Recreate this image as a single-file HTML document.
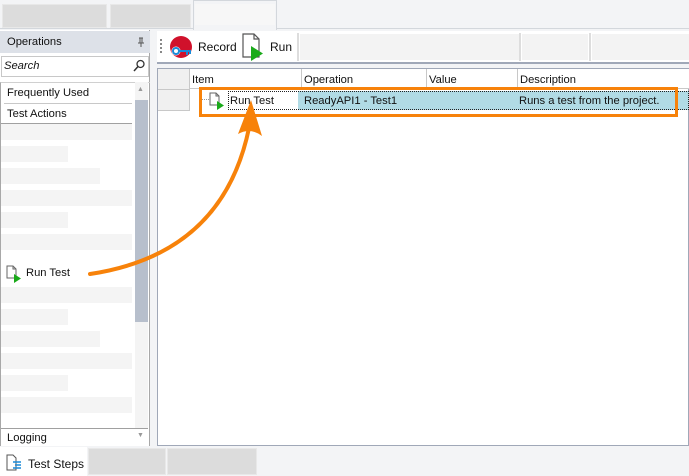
<html><head><style>
body{margin:0;width:689px;height:476px;background:#f3f4f6;position:relative;overflow:hidden;font-family:"Liberation Sans",sans-serif;font-size:11.2px;color:#111}
div{position:absolute;box-sizing:border-box}
.g{background:#f4f4f4}
.t{white-space:nowrap}
</style></head><body>
<div style="left:0;top:0;width:689px;height:29px;background:#f3f4f6;border-bottom:1px solid #d3d7dc"></div>
<div style="left:2px;top:4px;width:105px;height:24px;background:#dcdcdc;border:1px solid #e8e8e8"></div>
<div style="left:110px;top:4px;width:81px;height:24px;background:#dcdcdc;border:1px solid #e8e8e8"></div>
<div style="left:193px;top:0;width:84px;height:30px;background:#f3f4f6;border:1px solid #d3d7dc;border-bottom:none"></div>
<div style="left:195px;top:4px;width:80px;height:21px;background:#f7f7f7"></div>

<!-- left panel -->
<div style="left:0;top:30px;width:150px;height:416px;background:#fff;border-right:1px solid #a8a8a8"></div>
<div style="left:0;top:31px;width:150px;height:22px;background:#dde1e8"></div>
<div class="t" style="left:7px;top:36px">Operations</div>
<svg style="position:absolute;left:136px;top:37px" width="10" height="10"><path d="M3 1h4M4 1v5M6 1v5M2 6h6M5 6v4" stroke="#555" fill="none"/></svg>
<div style="left:1px;top:56px;width:148px;height:21px;background:#fff;border:1px solid #c8c8c8"></div>
<div class="t" style="left:4px;top:60px;font-style:italic">Search</div>
<svg style="position:absolute;left:133px;top:59px" width="12" height="13"><circle cx="7.5" cy="5" r="3.5" fill="none" stroke="#333" stroke-width="1.3"/><line x1="5" y1="7.5" x2="1" y2="12" stroke="#333" stroke-width="1.5"/></svg>
<div style="left:0;top:82px;width:150px;height:364px;border-left:1px solid #a8a8a8;border-top:1px solid #d0d0d0"></div>
<div class="t" style="left:7px;top:87px">Frequently Used</div>
<div style="left:4px;top:103px;width:128px;height:1px;background:#c8c8c8"></div>
<div class="t" style="left:7px;top:108px">Test Actions</div>
<div style="left:1px;top:123px;width:131px;height:1px;background:#a0a0a0"></div>
<div style="left:135px;top:82px;width:13px;height:346px;background:#f4f4f4"></div>
<div style="left:135px;top:100px;width:13px;height:222px;background:#b7bfcc"></div>
<div class="t" style="left:137px;top:86px;font-size:7px;color:#999">▲</div>
<div class="t" style="left:137px;top:432px;font-size:7px;color:#999">▼</div>
<div class="g" style="left:1px;top:124px;width:131px;height:16px"></div>
<div class="g" style="left:1px;top:146px;width:67px;height:16px"></div>
<div class="g" style="left:1px;top:168px;width:99px;height:16px"></div>
<div class="g" style="left:1px;top:190px;width:131px;height:16px"></div>
<div class="g" style="left:1px;top:212px;width:67px;height:16px"></div>
<div class="g" style="left:1px;top:234px;width:131px;height:16px"></div>
<div class="g" style="left:1px;top:287px;width:131px;height:16px"></div>
<div class="g" style="left:1px;top:309px;width:67px;height:16px"></div>
<div class="g" style="left:1px;top:331px;width:99px;height:16px"></div>
<div class="g" style="left:1px;top:353px;width:131px;height:16px"></div>
<div class="g" style="left:1px;top:375px;width:67px;height:16px"></div>
<div class="g" style="left:1px;top:397px;width:131px;height:16px"></div>
<svg style="position:absolute;left:5px;top:265px" width="18" height="18"><path d="M2 1h6l3 3v9H2z" fill="#fff" stroke="#666"/><path d="M8 1v3h3" fill="none" stroke="#666"/><path d="M9 9l7 4.5-7 4.5z" fill="#1aaa1a"/></svg>
<div class="t" style="left:26px;top:267px">Run Test</div>
<div style="left:1px;top:428px;width:147px;height:1px;background:#a0a0a0"></div>
<div class="t" style="left:7px;top:432px">Logging</div>

<!-- toolbar -->
<div style="left:157px;top:31px;width:532px;height:33px;background:#fff;border-bottom:2px solid #a0a8b8"></div>
<div style="left:160px;top:39px;width:2px;height:16px;background:repeating-linear-gradient(#888 0 2px,transparent 2px 4px)"></div>
<svg style="position:absolute;left:169px;top:36px" width="26" height="24"><circle cx="12" cy="11" r="11" fill="#d0112b"/><circle cx="7" cy="15" r="4.5" fill="#fff"/><circle cx="7" cy="15" r="3" fill="none" stroke="#1a8ad8" stroke-width="2"/><path d="M10 15h12M18 15v4M21 15v3" stroke="#1a8ad8" stroke-width="2"/></svg>
<div class="t" style="left:198px;top:40px;font-size:12px">Record</div>
<svg style="position:absolute;left:241px;top:33px" width="26" height="28"><path d="M2 1h11l5 5v18H2z" fill="#fff" stroke="#555" stroke-width="1.2"/><path d="M13 1v5h5" fill="none" stroke="#555" stroke-width="1.2"/><path d="M10 13l12 7.5L10 28z" fill="#1aaa1a"/></svg>
<div class="t" style="left:270px;top:40px;font-size:12px">Run</div>
<div style="left:297px;top:33px;width:2px;height:28px;background:#ddd"></div>
<div style="left:300px;top:34px;width:219px;height:26px;background:#f3f3f3"></div>
<div style="left:519px;top:33px;width:2px;height:28px;background:#ddd"></div>
<div style="left:522px;top:34px;width:66px;height:26px;background:#f3f3f3"></div>
<div style="left:589px;top:33px;width:2px;height:28px;background:#ddd"></div>
<div style="left:592px;top:34px;width:97px;height:26px;background:#f3f3f3"></div>

<!-- grid -->
<div style="left:157px;top:68px;width:532px;height:378px;background:#fff;border:1px solid #a0a8b8"></div>
<div style="left:158px;top:69px;width:531px;height:20px;background:#fff;border-bottom:1px solid #c8c8c8"></div>
<div style="left:158px;top:69px;width:32px;height:42px;background:#f0f0f0;border-right:1px solid #c8c8c8;border-bottom:1px solid #c8c8c8"></div>
<div style="left:158px;top:89px;width:32px;height:1px;background:#c8c8c8"></div>
<div style="left:301px;top:69px;width:1px;height:20px;background:#c8c8c8"></div>
<div style="left:426px;top:69px;width:1px;height:20px;background:#c8c8c8"></div>
<div style="left:517px;top:69px;width:1px;height:20px;background:#c8c8c8"></div>
<div class="t" style="left:192px;top:74px">Item</div>
<div class="t" style="left:304px;top:74px">Operation</div>
<div class="t" style="left:429px;top:74px">Value</div>
<div class="t" style="left:520px;top:74px">Description</div>
<div style="left:298px;top:91px;width:391px;height:19px;background:#b1dbe5"></div>
<div style="left:228px;top:91px;width:461px;height:19px;border:1px dotted #222"></div>
<div style="left:201px;top:99px;width:8px;height:1px;border-top:1px dotted #999"></div>
<svg style="position:absolute;left:208px;top:92px" width="18" height="18"><path d="M2 1h6l3 3v9H2z" fill="#fff" stroke="#666"/><path d="M8 1v3h3" fill="none" stroke="#666"/><path d="M9 9l7 4.5-7 4.5z" fill="#1aaa1a"/></svg>
<div class="t" style="left:230px;top:95px">Run Test</div>
<div class="t" style="left:304px;top:95px">ReadyAPI1 - Test1</div>
<div class="t" style="left:519px;top:95px">Runs a test from the project.</div>
<div style="left:199px;top:87px;width:479px;height:30px;border:3px solid #f7820a"></div>

<!-- arrow -->
<svg style="position:absolute;left:0;top:0" width="689" height="476"><path d="M90 274 C170 262 230 220 249 128" fill="none" stroke="#f7820a" stroke-width="4" stroke-linecap="round"/><path d="M238 134 L251 100 L262 136 Q250 127 238 134z" fill="#f7820a"/></svg>

<!-- bottom -->
<div style="left:0;top:446px;width:689px;height:30px;background:#f3f4f6"></div>
<div style="left:0;top:447px;width:87px;height:29px;background:#fff"></div>
<svg style="position:absolute;left:6px;top:454px" width="16" height="18"><path d="M1 1h6l3 3v12H1z" fill="#fff" stroke="#555"/><path d="M7 8h8M9 11h6M7 14h8" stroke="#1a8ad8" stroke-width="1.6"/></svg>
<div class="t" style="left:28px;top:457px;font-size:12px">Test Steps</div>
<div style="left:88px;top:448px;width:78px;height:27px;background:#dcdcdc;border:1px solid #e8e8e8"></div>
<div style="left:167px;top:448px;width:90px;height:27px;background:#dcdcdc;border:1px solid #e8e8e8"></div>
</body></html>
